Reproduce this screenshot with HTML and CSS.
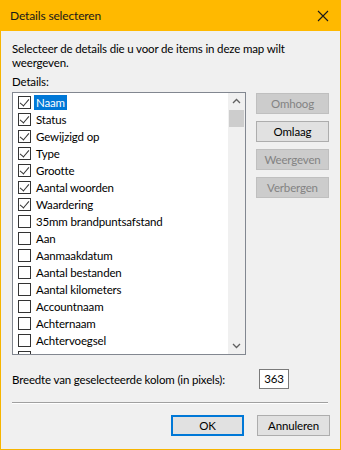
FILE: index.html
```html
<!DOCTYPE html>
<html lang="nl">
<head>
    <meta charset="UTF-8">
    <title>Details selecteren</title>
    <link rel="stylesheet" href="styles.css">
</head>
<body>
    <div class="window">
        <div class="titlebar">
            <span class="title">Details selecteren</span>
            <svg class="close" width="12" height="12" viewBox="0 0 12 12">
                <path d="M1 1 L11 11 M11 1 L1 11" stroke="#1a1a1a" stroke-width="1.1" fill="none"/>
            </svg>
        </div>
        <div class="content">
            <p class="intro">Selecteer de details die u voor de items in deze map wilt weergeven.</p>
            <p class="label">Details:</p>
            <div class="main">
                <div class="listbox">
                    <ul class="items">
                        <li class="item"><span class="check checked"></span><span class="text selected">Naam</span></li>
                        <li class="item"><span class="check checked"></span><span class="text">Status</span></li>
                        <li class="item"><span class="check checked"></span><span class="text">Gewijzigd op</span></li>
                        <li class="item"><span class="check checked"></span><span class="text">Type</span></li>
                        <li class="item"><span class="check checked"></span><span class="text">Grootte</span></li>
                        <li class="item"><span class="check checked"></span><span class="text">Aantal woorden</span></li>
                        <li class="item"><span class="check checked"></span><span class="text">Waardering</span></li>
                        <li class="item"><span class="check"></span><span class="text">35mm brandpuntsafstand</span></li>
                        <li class="item"><span class="check"></span><span class="text">Aan</span></li>
                        <li class="item"><span class="check"></span><span class="text">Aanmaakdatum</span></li>
                        <li class="item"><span class="check"></span><span class="text">Aantal bestanden</span></li>
                        <li class="item"><span class="check"></span><span class="text">Aantal kilometers</span></li>
                        <li class="item"><span class="check"></span><span class="text">Accountnaam</span></li>
                        <li class="item"><span class="check"></span><span class="text">Achternaam</span></li>
                        <li class="item"><span class="check"></span><span class="text">Achtervoegsel</span></li>
                        <li class="item"><span class="check"></span></li>
                    </ul>
                    <div class="scrollbar">
                        <svg class="arrow" width="17" height="17" viewBox="0 0 17 17">
                            <path d="M5 10 L8.5 6.5 L12 10" stroke="#606060" stroke-width="1.3" fill="none"/>
                        </svg>
                        <div class="thumb"></div>
                        <div class="track"></div>
                        <svg class="arrow" width="17" height="17" viewBox="0 0 17 17">
                            <path d="M5 7 L8.5 10.5 L12 7" stroke="#606060" stroke-width="1.3" fill="none"/>
                        </svg>
                    </div>
                </div>
                <div class="side-buttons">
                    <button class="btn" disabled>Omhoog</button>
                    <button class="btn">Omlaag</button>
                    <button class="btn" disabled>Weergeven</button>
                    <button class="btn" disabled>Verbergen</button>
                </div>
            </div>
            <div class="width-row">
                <span>Breedte van geselecteerde kolom (in pixels):</span>
                <span class="number-box">363</span>
            </div>
            <div class="separator"></div>
            <div class="footer">
                <button class="btn btn-default">OK</button>
                <button class="btn">Annuleren</button>
            </div>
        </div>
    </div>
</body>
</html>
```

FILE: styles.css
```css
* {
    margin: 0;
    padding: 0;
    box-sizing: border-box;
}
body {
    background-color: #f0f0f0;
    font-family: Lato, "Noto Sans", sans-serif;
    font-size: 11.5px;
    letter-spacing: -0.15px;
    color: #000;
}
.window {
    width: 341px;
    height: 450px;
    border: 1px solid #f7b500;
    border-top: none;
    background-color: #f0f0f0;
}
.titlebar {
    height: 31px;
    margin: 0 -1px;
    background-color: #ffb900;
    display: flex;
    justify-content: space-between;
    align-items: center;
    padding: 0 12px 0 10px;
}
.title {
    font-size: 12px;
    color: #1a1a1a;
}
.content {
    padding: 10px 10px 0 11px;
}
.intro {
    line-height: 14px;
    padding-top: 1px;
}
.label {
    line-height: 15px;
    margin-top: 4px;
    margin-bottom: 3px;
}
.main {
    display: flex;
    gap: 10px;
    height: 263px;
}
.listbox {
    width: 234px;
    height: 263px;
    border: 1px solid #828790;
    background-color: #fff;
    display: flex;
    overflow: hidden;
}
.items {
    list-style: none;
    flex: 1;
    padding-top: 1px;
}
.item {
    height: 17px;
    display: flex;
    align-items: center;
    padding-left: 5px;
}
.check {
    width: 13px;
    height: 13px;
    border: 1px solid #333;
    background-color: #fff;
    margin-right: 3px;
    position: relative;
}
.check.checked::after {
    content: "";
    position: absolute;
    left: 3px;
    top: 0px;
    width: 4px;
    height: 8px;
    border-right: 1.3px solid #333;
    border-bottom: 1.3px solid #333;
    transform: rotate(40deg);
}
.text {
    padding: 0 2px;
    line-height: 15px;
}
.selected {
    background-color: #0078d7;
    color: #fff;
}
.scrollbar {
    width: 17px;
    background-color: #f0f0f0;
    display: flex;
    flex-direction: column;
}
.arrow {
    display: block;
}
.thumb {
    height: 17px;
    margin: 0 1px;
    background-color: #cdcdcd;
}
.track {
    flex: 1;
}
.side-buttons {
    display: flex;
    flex-direction: column;
    gap: 7px;
    padding-top: 1px;
}
.btn {
    width: 73px;
    height: 21px;
    font-family: Lato, "Noto Sans", sans-serif;
    font-size: 11.5px;
    letter-spacing: -0.15px;
    background-color: #e1e1e1;
    border: 1px solid #adadad;
    color: #000;
}
.btn:disabled {
    background-color: #cccccc;
    border-color: #bfbfbf;
    color: #838383;
}
.btn-default {
    border: 2px solid #0078d7;
}
.width-row {
    display: flex;
    align-items: center;
    justify-content: space-between;
    width: 277px;
    margin-top: 14px;
    height: 20px;
}
.number-box {
    width: 30px;
    height: 20px;
    border: 1px solid #7a7a7a;
    background-color: #fff;
    text-align: center;
    line-height: 18px;
}
.separator {
    margin-top: 13px;
    height: 2px;
    width: 316px;
    border-top: 1px solid #a0a0a0;
    border-bottom: 1px solid #fff;
}
.footer {
    display: flex;
    justify-content: flex-end;
    gap: 13px;
    margin-top: 11px;
}
```
